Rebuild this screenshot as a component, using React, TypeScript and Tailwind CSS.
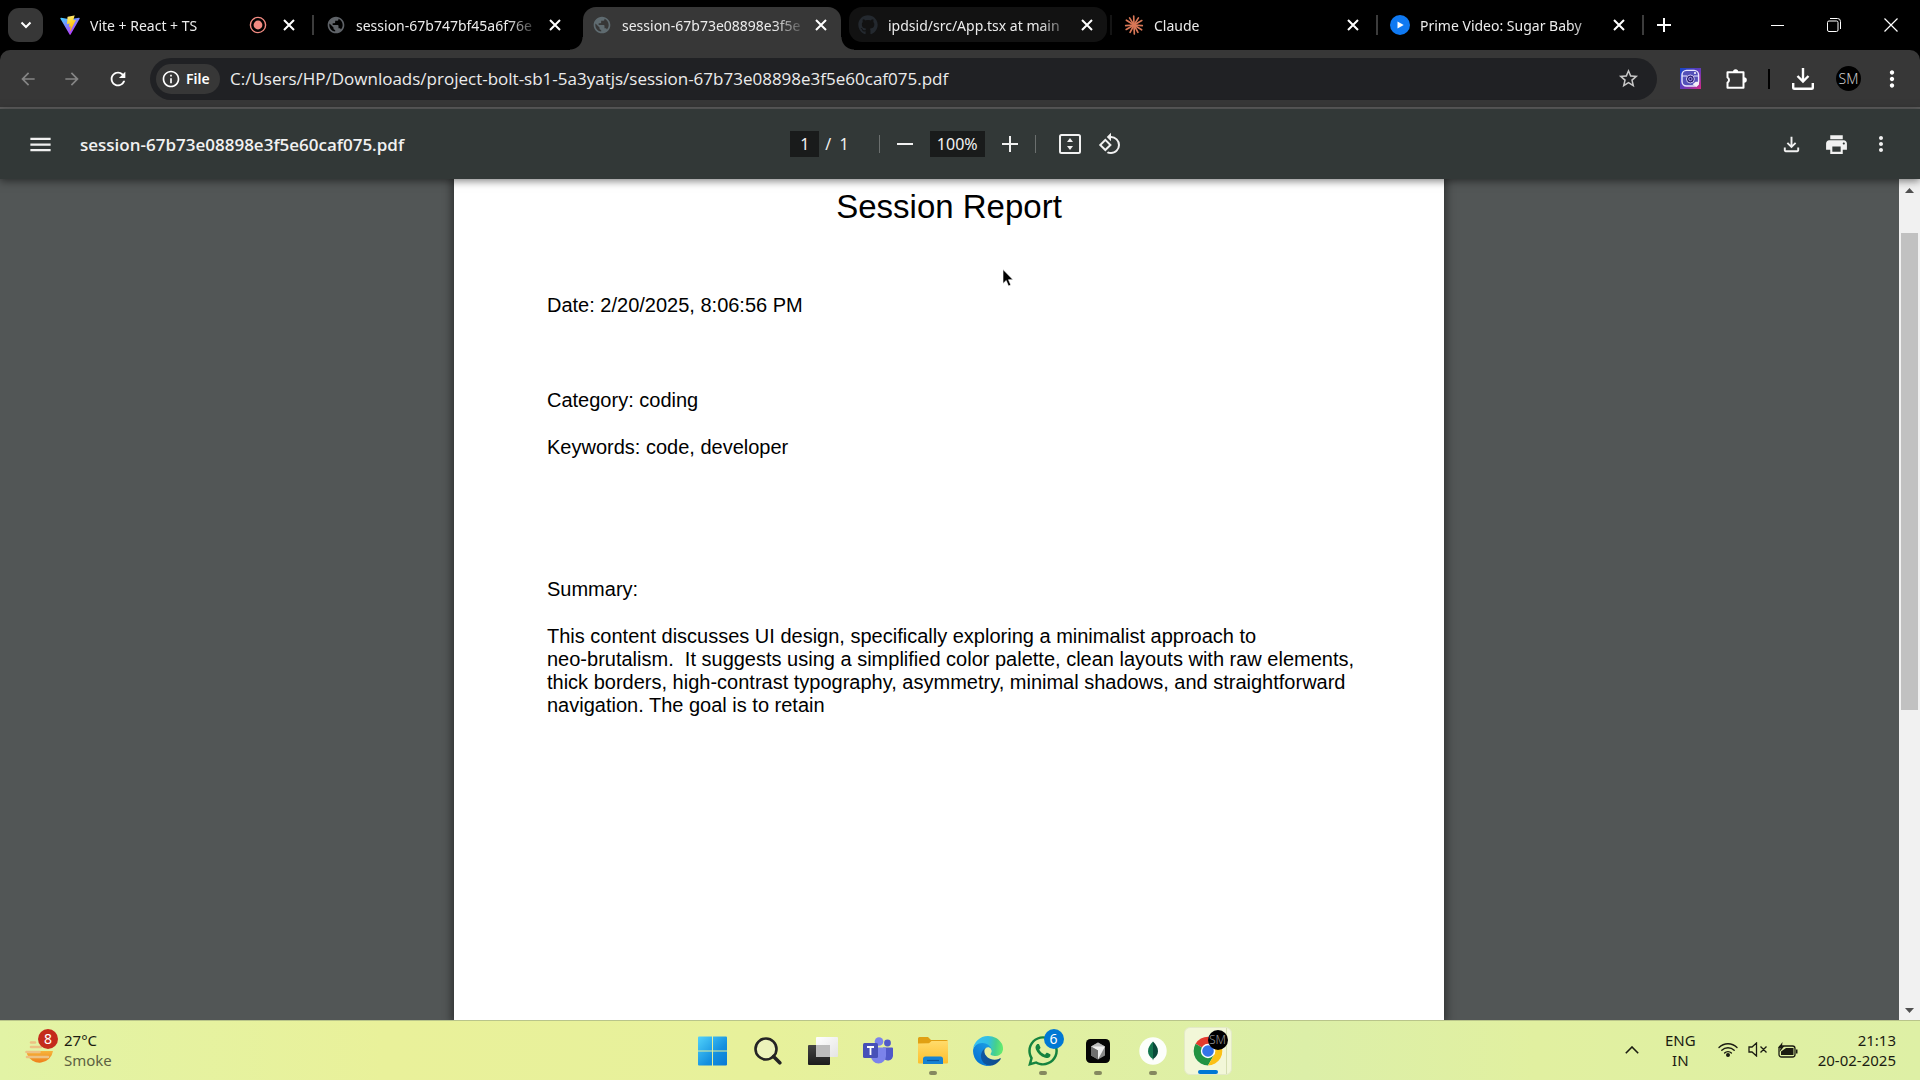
import type { ReactNode } from "react";
import { FaGithub, FaWhatsapp } from "react-icons/fa";
import {
  MdArrowBack,
  MdArrowForward,
  MdMenu,
  MdMoreVert,
  MdOutlineFileDownload,
  MdOutlineInfo,
  MdPrint,
  MdPublic,
  MdRefresh,
  MdStarBorder,
} from "react-icons/md";

const FILE_NAME = "session-67b73e08898e3f5e60caf075.pdf";

/* ---------- small drawings ---------- */

function ViteLogo() {
  return (
    <svg viewBox="0 0 32 32" className="size-5">
      <defs>
        <linearGradient id="viteA" x1="0" y1="0" x2="0.6" y2="1">
          <stop offset="0" stopColor="#41d1ff" />
          <stop offset="1" stopColor="#bd34fe" />
        </linearGradient>
        <linearGradient id="viteB" x1="0.4" y1="0" x2="0.6" y2="1">
          <stop offset="0" stopColor="#ffea83" />
          <stop offset="0.3" stopColor="#ffdd35" />
          <stop offset="1" stopColor="#ffa800" />
        </linearGradient>
      </defs>
      <path fill="url(#viteA)" d="M31.4 5.8 17 31.3a1 1 0 0 1-1.7 0L.7 5.8a1 1 0 0 1 1-1.4l14.4 2.5 14.2-2.5a1 1 0 0 1 1.1 1.4z" />
      <path fill="url(#viteB)" d="M22.8.6 12.3 2.7a.4.4 0 0 0-.3.4l-.7 10.9c0 .3.2.5.5.4l3-.7c.3 0 .5.2.4.5l-.9 4.2c0 .3.2.5.5.5l1.8-.6c.3-.1.5.2.5.5l-1.4 6.7c-.1.4.5.7.7.3l.2-.2 8.6-17.1c.1-.3-.1-.6-.4-.5l-3 .5c-.3.1-.5-.2-.5-.4l2-6.9c.1-.4-.2-.7-.5-.6z" />
    </svg>
  );
}

function ClaudeLogo() {
  const rays = [4, 32, 62, 88, 118, 150, 176, 212, 238, 268, 302, 330];
  return (
    <svg viewBox="-12 -12 24 24" className="size-5" stroke="#d97757" strokeWidth="2" strokeLinecap="round">
      {rays.map((a, i) => (
        <line key={a} x1="0" y1="0" x2={i % 2 ? 10.8 : 10} y2="0" transform={`rotate(${a})`} />
      ))}
    </svg>
  );
}

function PrimeLogo() {
  return (
    <svg viewBox="0 0 20 20" className="size-5">
      <circle cx="10" cy="10" r="10" fill="#0f79f2" />
      <path d="M7.5 6.4v7.2l6.2-3.6z" fill="#fff" />
    </svg>
  );
}

function RecordingDot() {
  return (
    <svg viewBox="0 0 18 18" className="size-[18px] shrink-0">
      <circle cx="9" cy="9" r="7.6" fill="none" stroke="#f28b82" strokeWidth="1.4" />
      <circle cx="9" cy="9" r="4.4" fill="#f28b82" />
    </svg>
  );
}

function Cross() {
  return (
    <svg viewBox="0 0 12 12" className="size-3" stroke="#fff" strokeWidth="2">
      <path d="M1 1l10 10M11 1L1 11" />
    </svg>
  );
}

function CameraExtension() {
  return (
    <svg viewBox="0 0 21 21" className="size-[21px]">
      <defs>
        <linearGradient id="cam" x1="0" y1="0" x2="1" y2="1">
          <stop offset="0" stopColor="#1446c8" />
          <stop offset="0.55" stopColor="#6a3ab8" />
          <stop offset="1" stopColor="#d62a86" />
        </linearGradient>
      </defs>
      <path fill="url(#cam)" d="M0 0h21v21H0z" />
      <rect x="2" y="2.4" width="16.6" height="15.6" rx="4.5" fill="#5450b8" stroke="#e9e6ff" strokeWidth="1.4" />
      <path d="M2 8h5M14 8h4.6" stroke="#e9e6ff" strokeWidth="1.2" />
      <circle cx="10.4" cy="11" r="4" fill="#2a1b70" stroke="#dcd8ff" strokeWidth=".9" />
      <circle cx="10.4" cy="11" r="1.7" fill="none" stroke="#a9a2f0" strokeWidth="1" />
      <circle cx="15" cy="5" r="1" fill="#fff" />
      <path d="M12.6 16.2l3-2.4h3.4v2.6l-2.6 2.6z" fill="#f3eef8" />
    </svg>
  );
}

function Puzzle() {
  return (
    <svg viewBox="0 0 22 22" className="size-[22px]" fill="none" stroke="#fff" strokeWidth="2" strokeLinejoin="round">
      <path d="M2.5 4.2h16v15.6h-16v-5.2a3 3 0 0 0 0-5.2z" />
      <path d="M8 4a2.6 2.8 0 0 1 5.2 0z" fill="#fff" stroke="none" />
      <path d="M19 9.200a2.800 2.800 0 0 1 0 5.600z" fill="#fff" stroke="none" />
    </svg>
  );
}

function FitPage() {
  return (
    <svg viewBox="0 0 22 20" className="h-5 w-[22px]" fill="none">
      <rect x="1" y="1" width="20" height="18" rx="1.5" stroke="#f1f1f1" strokeWidth="2" />
      <path d="M11 4l3 4H8zM11 16l3-4H8z" fill="#f1f1f1" />
    </svg>
  );
}

function RotateCcw() {
  return (
    <svg viewBox="0 0 24 24" className="size-6" fill="#f1f1f1">
      <path d="M7.34 6.41L.86 12.9l6.49 6.48 6.49-6.48-6.5-6.49zM3.69 12.9l3.66-3.66L11 12.9l-3.66 3.66-3.65-3.66zm15.67-6.26A8.95 8.95 0 0 0 13 4V.76L8.76 5 13 9.24V6c1.79 0 3.58.68 4.95 2.05a7.007 7.007 0 0 1 0 9.9 6.973 6.973 0 0 1-7.79 1.44l-1.49 1.49C10.02 21.62 11.51 22 13 22c2.3 0 4.61-.88 6.36-2.64a8.98 8.98 0 0 0 0-12.72z" />
    </svg>
  );
}

/* ---------- tab strip ---------- */

type TabProps = {
  icon: ReactNode;
  title: string;
  state?: "active" | "hover";
  recording?: boolean;
  divider?: "bright" | "dim";
};

function Tab({ icon, title, state, recording, divider }: TabProps) {
  return (
    <div className={`relative flex h-full w-[266px] min-w-0 shrink pt-[7px] pr-[7px] pl-px ${state === "active" ? "" : "pb-2"}`}>
      {state === "active" && (
        <>
          <span className="absolute bottom-0 -left-3 size-[13px] bg-[radial-gradient(circle_at_0_0,transparent_12px,#373737_13px)]" />
          <span className="absolute right-[-6px] bottom-0 size-[13px] bg-[radial-gradient(circle_at_100%_0,transparent_12px,#373737_13px)]" />
        </>
      )}
      <div
        className={`flex min-w-0 flex-1 items-center pr-[10px] pl-[9px] ${
          state === "active" ? "rounded-t-[13px] bg-[#373737] pb-2" : state === "hover" ? "rounded-[13px] bg-[#121212]" : ""
        }`}
      >
        <span className="flex size-5 shrink-0 items-center justify-center">{icon}</span>
        <span className="ml-[10px] min-w-0 flex-1 overflow-hidden pt-[2px] text-sm whitespace-nowrap text-[#ececec] [mask-image:linear-gradient(to_right,black_82%,transparent)]">
          {title}
        </span>
        {recording && <RecordingDot />}
        <button aria-label={`Close ${title}`} className={`flex size-5 shrink-0 items-center justify-center ${recording ? "ml-3" : "ml-1"}`}>
          <Cross />
        </button>
      </div>
      {divider && (
        <span className={`absolute top-[15px] right-[2px] h-5 w-[2px] ${divider === "bright" ? "bg-[#3c3c3c]" : "bg-[#141414]"}`} />
      )}
    </div>
  );
}

function TabStrip() {
  return (
    <header className="flex h-[50px] shrink-0 bg-black">
      <button aria-label="Search tabs" className="mt-2 mr-[7px] ml-2 flex h-[34px] w-[35px] shrink-0 items-center justify-center rounded-[11px] bg-[#373737]">
        <svg viewBox="0 0 12 8" className="h-2 w-3" fill="none" stroke="#fff" strokeWidth="2">
          <path d="M1.5 1.5L6 6l4.500-4.500" />
        </svg>
      </button>
      <nav aria-label="Tabs" className="flex min-w-0">
        <Tab icon={<ViteLogo />} title="Vite + React + TS" recording divider="bright" />
        <Tab icon={<MdPublic className="size-5 text-[#5f6368]" />} title="session-67b747bf45a6f76e" />
        <Tab icon={<MdPublic className="size-5 text-[#5f6b70]" />} title="session-67b73e08898e3f5e" state="active" />
        <Tab icon={<FaGithub className="size-5 text-[#24292f]" />} title="ipdsid/src/App.tsx at main" state="hover" divider="dim" />
        <Tab icon={<ClaudeLogo />} title="Claude" divider="bright" />
        <Tab icon={<PrimeLogo />} title="Prime Video: Sugar Baby" divider="bright" />
      </nav>
      <button aria-label="New tab" className="flex w-9 shrink-0 items-center justify-center">
        <svg viewBox="0 0 14 14" className="size-[14px]" stroke="#fff" strokeWidth="2">
          <path d="M7 0v14M0 7h14" />
        </svg>
      </button>
      <div className="ml-auto flex shrink-0 items-center">
        <button aria-label="Minimise" className="flex h-full w-14 items-center justify-center">
          <span className="h-px w-[13px] bg-white" />
        </button>
        <button aria-label="Restore" className="flex h-full w-[57px] items-center justify-center">
          <svg viewBox="0 0 14 14" className="size-[14px]" fill="none" stroke="#fff">
            <rect x="0.5" y="3" width="10.500" height="10.500" rx="1.500" />
            <path d="M3 .5h7.500a3 3 0 0 1 3 3V11" />
          </svg>
        </button>
        <button aria-label="Close window" className="flex h-full w-[58px] items-center justify-center">
          <svg viewBox="0 0 14 14" className="size-[14px]" stroke="#fff" strokeWidth="1.2">
            <path d="M.5.5l13 13M13.500.5l-13 13" />
          </svg>
        </button>
      </div>
    </header>
  );
}

/* ---------- address bar ---------- */

function AddressBar() {
  return (
    <div className="shrink-0 bg-black">
      <div className="flex h-[59px] items-center rounded-t-[10px] border-b-2 border-[#5e5e5e] bg-[#373737] pl-[6px]">
        <button aria-label="Back" className="flex w-11 justify-center text-[#858585]">
          <MdArrowBack className="size-5" />
        </button>
        <button aria-label="Forward" className="flex w-11 justify-center text-[#858585]">
          <MdArrowForward className="size-5" />
        </button>
        <button aria-label="Reload" className="flex w-12 justify-center text-white">
          <MdRefresh className="size-[22px]" />
        </button>
        <div className="ml-2 flex h-[42px] min-w-0 flex-1 items-center rounded-full bg-[#202124] pr-[17px] pl-[6px]">
          <button className="flex h-[30px] w-16 shrink-0 items-center gap-[5px] rounded-full bg-[#373737] pl-[5px] text-sm font-semibold text-white">
            <MdOutlineInfo className="size-5" />
            File
          </button>
          <input
            aria-label="Address"
            readOnly
            value={`C:/Users/HP/Downloads/project-bolt-sb1-5a3yatjs/${FILE_NAME}`}
            className="ml-[10px] min-w-0 flex-1 bg-transparent font-['Open_Sans',sans-serif] text-[17px] text-[#ececec] outline-none"
          />
          <button aria-label="Bookmark this page" className="text-[#c7c7c7]">
            <MdStarBorder className="size-[23px]" />
          </button>
        </div>
        <div className="flex shrink-0 items-center pl-[11px]">
          <button aria-label="Capture extension" className="flex w-11 justify-center">
            <CameraExtension />
          </button>
          <button aria-label="Extensions" className="flex w-12 justify-center">
            <Puzzle />
          </button>
          <span className="mx-2 h-5 w-[2px] bg-black" />
          <button aria-label="Downloads" className="flex w-[50px] justify-center">
            <svg viewBox="0 0 22 22" className="size-[22px]" fill="none" stroke="#fff" strokeWidth="2.400">
              <path d="M11 0v13M5.500 8l5.500 5.500L16.500 8M1.200 15v4.500c0 .8.5 1.300 1.300 1.300h17c.8 0 1.300-.5 1.300-1.300V15" />
            </svg>
          </button>
          <button aria-label="Profile" className="mr-[9px] ml-2 flex size-[25px] items-center justify-center rounded-full bg-black text-sm font-light text-[#c9c9c9]">
            SM
          </button>
          <button aria-label="Browser menu" className="mr-[6px] flex w-11 justify-center text-white">
            <MdMoreVert className="size-[26px]" />
          </button>
        </div>
      </div>
    </div>
  );
}

/* ---------- PDF viewer ---------- */

function PdfToolbar() {
  return (
    <div className="relative z-10 grid h-[70px] shrink-0 grid-cols-[1fr_auto_1fr] items-center bg-[#323837] pr-2 text-base text-[#f1f1f1] shadow-[0_2px_8px_rgba(0,0,0,0.5)]">
      <div className="flex min-w-0 items-center pl-[27px]">
        <button aria-label="Menu">
          <MdMenu className="size-[27px]" />
        </button>
        <h1 className="ml-[26px] pt-px font-['Open_Sans',sans-serif] text-[17px] font-semibold whitespace-nowrap">{FILE_NAME}</h1>
      </div>
      <div className="flex items-center">
        <input aria-label="Page number" readOnly value="1" className="h-[26px] w-[29px] bg-[#191b1b] text-center outline-none" />
        <span className="ml-[6px] whitespace-pre">/  1</span>
        <span className="ml-[30px] h-[18px] w-px bg-[#6b6f6e]" />
        <button aria-label="Zoom out" className="flex w-[50px] justify-center">
          <span className="h-[2px] w-4 bg-[#f1f1f1]" />
        </button>
        <input aria-label="Zoom level" readOnly value="100%" className="h-[26px] w-[55px] bg-[#191b1b] text-center outline-none" />
        <button aria-label="Zoom in" className="flex w-[50px] justify-center">
          <svg viewBox="0 0 16 16" className="size-4" stroke="#f1f1f1" strokeWidth="2">
            <path d="M8 0v16M0 8h16" />
          </svg>
        </button>
        <span className="h-[18px] w-px bg-[#6b6f6e]" />
        <button aria-label="Fit to page" className="ml-[23px]">
          <FitPage />
        </button>
        <button aria-label="Rotate counterclockwise" className="ml-[17px]">
          <RotateCcw />
        </button>
      </div>
      <div className="flex items-center justify-end pr-[9px]">
        <button aria-label="Download" className="flex w-[45px] justify-center">
          <MdOutlineFileDownload className="size-[23px]" />
        </button>
        <button aria-label="Print" className="flex w-[45px] justify-center">
          <MdPrint className="size-[25px]" />
        </button>
        <button aria-label="More actions" className="flex w-11 justify-center">
          <MdMoreVert className="size-6" />
        </button>
      </div>
    </div>
  );
}

function PdfPage() {
  return (
    <article className="flex w-[990px] shrink-0 flex-col bg-white px-[93px] pt-[9px] font-['Liberation_Sans',Arial,sans-serif] text-xl leading-[23px] text-black shadow-[0_0_8px_3px_rgba(0,0,0,0.4)]">
      <h2 className="text-center text-[33px] leading-[38px]">Session Report</h2>
      <p className="mt-[68px]">Date: 2/20/2025, 8:06:56 PM</p>
      <p className="mt-[72px]">Category: coding</p>
      <p className="mt-6">Keywords: code, developer</p>
      <p className="mt-[119px]">Summary:</p>
      <p className="mt-6 whitespace-pre">
        {"This content discusses UI design, specifically exploring a minimalist approach to\n"}
        {"neo-brutalism.  It suggests using a simplified color palette, clean layouts with raw elements,\n"}
        {"thick borders, high-contrast typography, asymmetry, minimal shadows, and straightforward\n"}
        {"navigation. The goal is to retain"}
      </p>
    </article>
  );
}

function ScrollBar() {
  return (
    <div className="flex w-[21px] shrink-0 flex-col items-center bg-[#f1f1f1] pt-[9px] pb-[7px]">
      <span className="h-[5px] w-[9px] bg-[#505050] [clip-path:polygon(50%_0,100%_100%,0_100%)]" />
      <span className="mt-10 h-[477px] w-[17px] bg-[#c1c1c1]" />
      <span className="mt-auto h-[5px] w-[9px] bg-[#505050] [clip-path:polygon(0_0,100%_0,50%_100%)]" />
    </div>
  );
}

function Viewer() {
  return (
    <main className="relative flex min-h-0 flex-1 overflow-hidden bg-[#525656]">
      <div className="flex min-w-0 flex-1 justify-center pr-px">
        <PdfPage />
      </div>
      <ScrollBar />
      <svg viewBox="0 0 12 18" className="absolute top-[90px] left-[1002px] h-[18px] w-3">
        <path d="M1 .5v14l3.200-3 2.300 5.500 2.300-1-2.300-5.300h4.500z" fill="#000" stroke="#fff" strokeWidth=".6" />
      </svg>
    </main>
  );
}

/* ---------- taskbar ---------- */

function TaskItem({ label, running, children }: { label: string; running?: boolean; children: ReactNode }) {
  return (
    <button aria-label={label} className="relative flex h-12 w-[55px] items-center justify-center">
      {children}
      {running && <span className="absolute bottom-0 h-1 w-2 rounded-full bg-[#85895f]" />}
    </button>
  );
}

function StartIcon() {
  return (
    <svg viewBox="0 0 30 30" className="size-[30px]">
      <defs>
        <linearGradient id="win" x1="0" y1="0" x2="30" y2="30" gradientUnits="userSpaceOnUse">
          <stop offset="0" stopColor="#52d3fb" />
          <stop offset="0.6" stopColor="#1490df" />
          <stop offset="1" stopColor="#0878d4" />
        </linearGradient>
      </defs>
      <path fill="url(#win)" d="M0 1.500a1 1 0 0 1 1-1H14v14H0zM15 .500h13a1 1 0 0 1 1 1v13h-14zM0 15.500h14v14H1a1 1 0 0 1-1-1zM15 15.500h14v13a1 1 0 0 1-1 1h-13z" />
    </svg>
  );
}

function SearchIcon() {
  return (
    <svg viewBox="0 0 28 28" className="size-7" fill="none">
      <circle cx="12" cy="12" r="10.500" stroke="#242424" strokeWidth="2.600" fill="#f2f6dc" fillOpacity=".5" />
      <path d="M19.500 19.500l6.300 6.300" stroke="#242424" strokeWidth="3.600" strokeLinecap="round" />
    </svg>
  );
}

function TaskViewIcon() {
  return (
    <svg viewBox="0 0 30 28" className="h-7 w-[30px]">
      <defs>
        <linearGradient id="tvA" x1="0" y1="0" x2="0" y2="1">
          <stop offset="0" stopColor="#444" />
          <stop offset="1" stopColor="#1c1c1c" />
        </linearGradient>
        <linearGradient id="tvB" x1="0" y1="0" x2="1" y2="1">
          <stop offset="0" stopColor="#fff" />
          <stop offset="1" stopColor="#e4e4e4" />
        </linearGradient>
      </defs>
      <rect x="0" y="8" width="22" height="20" rx="1" fill="url(#tvA)" />
      <rect x="8" y="0" width="22" height="20" rx="1" fill="url(#tvB)" />
      <path d="M8 8h14v12H8z" fill="#bcbcbc" />
    </svg>
  );
}

function TeamsIcon() {
  return (
    <svg viewBox="0 0 30 27" className="h-[27px] w-[30px]">
      <circle cx="24.500" cy="6" r="3.400" fill="#5059c9" />
      <path d="M20 10.500h9a1 1 0 0 1 1 1v6.500a5 5 0 0 1-10 1z" fill="#5059c9" />
      <circle cx="16" cy="4.500" r="4.300" fill="#7b83eb" />
      <path d="M9 10.500h13a1 1 0 0 1 1 1V19a7.500 7.500 0 0 1-15 0z" fill="#7b83eb" />
      <rect x="0" y="6" width="15" height="15" rx="1.500" fill="#4750b8" />
      <path d="M4 10h7M7.500 10v8" stroke="#fff" strokeWidth="1.800" />
    </svg>
  );
}

function FolderIcon() {
  return (
    <svg viewBox="0 0 30 27" className="h-[27px] w-[30px]">
      <defs>
        <linearGradient id="fold" x1="0" y1="0" x2="0" y2="1">
          <stop offset="0" stopColor="#ffdb6b" />
          <stop offset="1" stopColor="#fdbf2d" />
        </linearGradient>
      </defs>
      <path d="M0 1.500A1.500 1.500 0 0 1 1.500 0h8.500l3 3h15.500A1.500 1.500 0 0 1 30 4.500V12H0z" fill="#e0a013" />
      <path d="M0 6.500l11-.2L13.500 4H30v21.500a1 1 0 0 1-1 1H1a1 1 0 0 1-1-1z" fill="url(#fold)" />
      <path d="M5 27v-5a2.500 2.500 0 0 1 2.500-2.500h15A2.500 2.500 0 0 1 25 22v5z" fill="#1683d3" />
      <path d="M9 23.500h12" stroke="#0b559e" strokeWidth="1.200" />
    </svg>
  );
}

function EdgeIcon() {
  return (
    <svg viewBox="0 0 256 256" className="size-[30px]">
      <defs>
        <linearGradient id="edA" x1="63" y1="177" x2="242" y2="177" gradientUnits="userSpaceOnUse">
          <stop offset="0" stopColor="#0c59a4" />
          <stop offset="1" stopColor="#114a8b" />
        </linearGradient>
        <linearGradient id="edB" x1="157" y1="97" x2="46" y2="218" gradientUnits="userSpaceOnUse">
          <stop offset="0" stopColor="#1b9de2" />
          <stop offset="0.6" stopColor="#1084dc" />
          <stop offset="1" stopColor="#0678d4" />
        </linearGradient>
        <linearGradient id="edC" x1="20" y1="70" x2="250" y2="100" gradientUnits="userSpaceOnUse">
          <stop offset="0" stopColor="#35c1f1" />
          <stop offset="0.45" stopColor="#32bfe4" />
          <stop offset="0.75" stopColor="#45d08c" />
          <stop offset="1" stopColor="#66eb6e" />
        </linearGradient>
      </defs>
      <path fill="url(#edA)" d="M231 190.500c-3.400 1.800-6.900 3.400-10.500 4.700a101 101 0 0 1-35.600 6.400c-47 0-87.900-32.300-87.900-73.800.1-11.400 6.400-21.800 16.400-27.200-42.500 1.800-53.400 46.100-53.400 72 0 73.500 67.700 80.900 82.300 80.900 7.900 0 19.700-2.300 26.800-4.500l1.300-.4a128 128 0 0 0 66.600-52.800c2.600-4.100-2.200-7.200-6-5.300z" />
      <path fill="url(#edB)" d="M105.700 241.400a79 79 0 0 1-22.700-21.300 80.700 80.700 0 0 1 29.500-120c3.200-1.500 8.500-4.100 15.600-4 10.100.1 19.600 4.900 25.700 13 4 5.400 6.300 11.900 6.400 18.700 0-.2 24.500-79.600-80-79.600-43.900 0-80 41.700-80 78.200a130 130 0 0 0 12.100 56 128 128 0 0 0 156.400 67.100 75.500 75.500 0 0 1-63-8.100z" />
      <path fill="url(#edC)" d="M152.300 148.900c-.9 1-3.300 2.500-3.300 5.700 0 2.600 1.700 5.200 4.800 7.300 14.400 10.100 41.700 8.700 41.700 8.700 10.800 0 21.300-2.900 30.500-8.400a61.900 61.900 0 0 0 30.400-53.300c.3-22.400-8-37.300-11.300-43.900C223.800 23.900 177.700 0 127.600 0A128 128 0 0 0-.4 126.200c.5-36.500 36.800-66 80-66 3.500 0 23.500.3 42 10.100 16.300 8.600 24.900 19 30.800 29.200 6.200 10.700 7.300 24.100 7.300 29.500s-2.700 13.300-7.400 19.900z" />
    </svg>
  );
}

function CursorAppIcon() {
  return (
    <svg viewBox="0 0 24 24" className="size-6">
      <rect width="24" height="24" rx="4.500" fill="#050505" />
      <path d="M12 3.500l7 4v9l-7 4-7-4v-9z" fill="#8a8a8a" />
      <path d="M5 7.500l7-4 7 4-7 1.500z" fill="#b9b9b9" />
      <path d="M5 7.500h14l-7 13v-9z" fill="#ededed" />
      <path d="M5 7.500l7 4v9l-7-4z" fill="#6f6f6f" />
    </svg>
  );
}

function MongoIcon() {
  return (
    <svg viewBox="0 0 28 28" className="size-7">
      <circle cx="14" cy="14" r="13.700" fill="#fcfefb" />
      <path d="M14 4.500c-3 3.200-5 6-5 9.700 0 3.500 2.300 6 4.500 7.600l.5 1.700z" fill="#14774f" />
      <path d="M14 4.500c3 3.200 5 6 5 9.700 0 3.500-2.300 6-4.500 7.600l-.5 1.700z" fill="#0a4a3a" />
    </svg>
  );
}

function ChromeIcon() {
  return (
    <svg viewBox="0 0 48 48" className="size-[30px]">
      <circle cx="24" cy="24" r="23" fill="#fff" />
      <path d="M24 24L4.100 12.500A23 23 0 0 1 43.900 12.500H24z" fill="#e33b2e" />
      <path d="M4.100 12.500A23 23 0 0 0 24 47l10-17.300L24 24z" fill="#229342" />
      <path d="M43.900 12.500A23 23 0 0 1 24 47l10-17.300a11.500 11.500 0 0 0 0-11.500l-4-5.700z" fill="#fbc116" />
      <circle cx="24" cy="24" r="11.500" fill="#fff" />
      <circle cx="24" cy="24" r="9.300" fill="#3474e8" />
    </svg>
  );
}

function WeatherIcon() {
  return (
    <svg viewBox="0 0 28 24" className="h-6 w-7">
      <defs>
        <linearGradient id="sun" x1="0" y1="0" x2="0" y2="1">
          <stop offset="0" stopColor="#f6b43c" />
          <stop offset="1" stopColor="#ef7f1a" />
        </linearGradient>
      </defs>
      <path d="M2 11h26a13.500 13.500 0 0 1-26 3z" fill="url(#sun)" />
      <path d="M6 2.500h4M6 7h10M1.500 12h13M2 17h21" stroke="#edc183" strokeWidth="2.600" strokeLinecap="round" />
    </svg>
  );
}

function Taskbar() {
  return (
    <footer className="grid h-[60px] shrink-0 grid-cols-[1fr_auto_1fr] items-center border-t border-[#b9c58a] bg-[linear-gradient(to_right,#e2f3a5,#e9f19a_20%,#e7f19b_40%,#dcefa8_68%,#e1f0a0_80%,#def0a5)]">
      <button className="relative flex w-fit items-center pb-[2px] pl-[25px] text-left">
        <span className="pt-1">
          <WeatherIcon />
        </span>
        <span className="absolute -top-px left-[38px] flex size-5 items-center justify-center rounded-full bg-[#c42b1c] text-sm leading-5 text-white">8</span>
        <span className="ml-[11px] text-[15px] leading-5 text-[#1b1c12]">
          27°C
          <br />
          <span className="text-[#5d6142]">Smoke</span>
        </span>
      </button>
      <div className="flex items-center">
        <TaskItem label="Start">
          <StartIcon />
        </TaskItem>
        <TaskItem label="Search">
          <SearchIcon />
        </TaskItem>
        <TaskItem label="Task view">
          <TaskViewIcon />
        </TaskItem>
        <TaskItem label="Teams">
          <TeamsIcon />
        </TaskItem>
        <TaskItem label="File Explorer" running>
          <FolderIcon />
        </TaskItem>
        <TaskItem label="Edge">
          <EdgeIcon />
        </TaskItem>
        <TaskItem label="WhatsApp" running>
          <FaWhatsapp className="size-[34px] text-[#15833f]" />
          <span className="absolute top-[2px] right-[7px] flex size-5 items-center justify-center rounded-full bg-[#0078d4] text-sm leading-5 text-white">6</span>
        </TaskItem>
        <TaskItem label="Cursor" running>
          <CursorAppIcon />
        </TaskItem>
        <TaskItem label="MongoDB Compass" running>
          <MongoIcon />
        </TaskItem>
        <button aria-label="Chrome" className="relative mx-[3px] flex size-12 items-center justify-center rounded-md border border-[#e3eac6] bg-[#f2f7d8]">
          <span className="absolute inset-y-0 right-[4px] w-px bg-[#d5deb0]" />
          <ChromeIcon />
          <span className="absolute top-[2px] right-[3px] flex size-5 items-center justify-center rounded-full bg-black text-xs font-light text-[#9a9a9a]">SM</span>
          <span className="absolute bottom-0 h-1 w-5 rounded-full bg-[#0078d4]" />
        </button>
      </div>
      <div className="flex items-center justify-end pr-6 pb-[2px] text-[15px] leading-5 text-[#1b1c12]">
        <button aria-label="Show hidden icons" className="mr-[26px]">
          <svg viewBox="0 0 14 8" className="h-2 w-[14px]" fill="none" stroke="#1b1c12" strokeWidth="1.600">
            <path d="M.8 7.200L7 1l6.200 6.200" />
          </svg>
        </button>
        <button className="text-center">
          ENG
          <br />
          IN
        </button>
        <button aria-label="Network, volume and battery" className="ml-[22px] flex items-center gap-[10px]">
          <svg viewBox="0 0 20 15" className="h-[15px] w-5" fill="none" stroke="#1b1c12" strokeWidth="1.400" strokeLinecap="round">
            <path d="M1 5.500a12.700 12.700 0 0 1 18 0M3.800 8.300a8.800 8.800 0 0 1 12.400 0M6.600 11a4.800 4.800 0 0 1 6.800 0" />
            <circle cx="10" cy="13" r="1.300" fill="#1b1c12" />
          </svg>
          <svg viewBox="0 0 20 15" className="h-[15px] w-5" fill="none" stroke="#1b1c12" strokeWidth="1.300">
            <path d="M1 5h3l4.500-4v13L4 10H1zM12.500 4.500l6 6M18.500 4.500l-6 6" />
          </svg>
          <svg viewBox="0 0 20 16" className="h-4 w-5">
            <rect x="1" y="4" width="16" height="11" rx="2.500" fill="none" stroke="#1b1c12" strokeWidth="1.300" />
            <path d="M8 6h7.500v7H3v-3.500zM18 7.500h1.500v4H18z" fill="#1b1c12" />
            <path d="M4.500 0L0 6h2.500L1.500 10 6.500 4H4z" fill="#1b1c12" />
          </svg>
        </button>
        <button className="ml-5 text-right">
          21:13
          <br />
          20-02-2025
        </button>
      </div>
    </footer>
  );
}

export default function App() {
  return (
    <div className="flex h-screen flex-col overflow-hidden font-['Noto_Sans','Open_Sans',sans-serif]">
      <TabStrip />
      <AddressBar />
      <PdfToolbar />
      <Viewer />
      <Taskbar />
    </div>
  );
}
